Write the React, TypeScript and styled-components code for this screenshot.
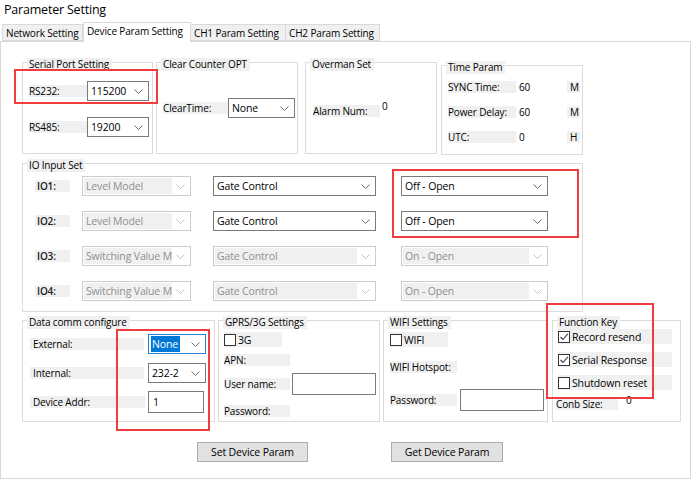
import styled, { createGlobalStyle } from "styled-components";

// ==================== Global =================

const GlobalStyle = createGlobalStyle`
  html, body {
    margin: 0;
    padding: 0;
    background: #fff;
  }
  body {
    font-family: "Open Sans", "Noto Sans", "Noto Sans CJK SC", sans-serif;
    font-size: 10px;
    letter-spacing: -0.15px;
    color: #000;
  }
  * {
    box-sizing: border-box;
  }
`;

// ==================== small controls =================

const Chevron = ({ color }: { color: string }) => (
  <svg width="9" height="5" viewBox="0 0 9 5">
    <path d="M0.5 0.5 L4.5 4.5 L8.5 0.5" fill="none" stroke={color} strokeWidth="1" />
  </svg>
);

interface IComboProps {
  width: number;
  value: string;
  disabled?: boolean;
  focused?: boolean;
}

const ComboBox = ({ width, value, disabled, focused }: IComboProps) => (
  <ComboFrame $w={width} $disabled={disabled} $focused={focused}>
    <ComboText $disabled={disabled}>
      {focused ? <Selected>{value}</Selected> : value}
    </ComboText>
    <ComboArrow>
      <Chevron color={disabled ? "#c4c4c4" : "#6d6d6d"} />
    </ComboArrow>
  </ComboFrame>
);

const ComboFrame = styled.div<{ $w: number; $disabled?: boolean; $focused?: boolean }>`
  width: ${(p) => p.$w}px;
  height: 20px;
  flex-shrink: 0;
  display: flex;
  padding: 1px;
  background: #fff;
  border: 1px solid
    ${(p) => (p.$disabled ? "#cccccc" : p.$focused ? "#2a83dc" : "#7a7a7a")};
`;

const ComboText = styled.div<{ $disabled?: boolean }>`
  flex: 1;
  min-width: 0;
  padding-left: 2px;
  font-size: 10.5px;
  line-height: 16px;
  white-space: nowrap;
  overflow: hidden;
  color: ${(p) => (p.$disabled ? "#8f8f8f" : "#000")};
  background: ${(p) => (p.$disabled ? "#f0f0f0" : "transparent")};
`;

const Selected = styled.span`
  display: inline-block;
  height: 16px;
  padding: 0 2px 0 1px;
  margin-left: -1px;
  background: #0078d7;
  color: #fff;
`;

const ComboArrow = styled.div`
  width: 17px;
  flex-shrink: 0;
  display: flex;
  align-items: center;
  justify-content: center;
`;

const TextBox = styled.div<{ $w: number; $h: number; $ml?: number }>`
  width: ${(p) => p.$w}px;
  height: ${(p) => p.$h}px;
  margin-left: ${(p) => p.$ml ?? 0}px;
  flex-shrink: 0;
  border: 1px solid #7a7a7a;
  background: #fff;
  padding-left: 4px;
  font-size: 10.5px;
  line-height: ${(p) => p.$h - 2}px;
`;

const CheckBox = ({ label, checked, width }: { label: string; checked?: boolean; width: number }) => (
  <CheckRow $w={width}>
    <CheckSquare>
      {checked && (
        <svg width="10" height="10" viewBox="0 0 10 10">
          <path d="M1.5 5 L4 7.5 L8.8 1.8" fill="none" stroke="#3c3c3c" strokeWidth="1.1" />
        </svg>
      )}
    </CheckSquare>
    <span>{label}</span>
  </CheckRow>
);

const CheckRow = styled.div<{ $w: number }>`
  width: ${(p) => p.$w}px;
  height: 15px;
  display: flex;
  align-items: center;
  gap: 2px;
  background: #f0f0f0;
  white-space: nowrap;
  font-size: 10.5px;
`;

const CheckSquare = styled.div`
  width: 12px;
  height: 12px;
  flex-shrink: 0;
  border: 1px solid #333;
  background: #fff;
  display: flex;
  align-items: center;
  justify-content: center;
`;

const Label = styled.div<{ $w: number; $h?: number; $pl?: number }>`
  width: ${(p) => p.$w}px;
  height: ${(p) => p.$h ?? 12}px;
  line-height: ${(p) => p.$h ?? 12}px;
  padding-left: ${(p) => p.$pl ?? 0}px;
  flex-shrink: 0;
  background: #f0f0f0;
  white-space: nowrap;
`;

const Value = styled.div<{ $w?: number; $ml?: number; $raise?: number }>`
  width: ${(p) => (p.$w ? `${p.$w}px` : "auto")};
  margin-left: ${(p) => p.$ml ?? 0}px;
  line-height: 12px;
  transform: translateY(${(p) => -(p.$raise ?? 0)}px);
`;

const Unit = styled.div`
  width: 13px;
  height: 12px;
  line-height: 12px;
  padding-left: 3px;
  background: #f0f0f0;
`;

// ==================== App =================

const App = () => {
  return (
    <Window>
      <GlobalStyle />
      <Caption>Parameter Setting</Caption>
      <TabStrip>
        <Tab $w={81}>Network Setting</Tab>
        <Tab $w={108} $active>
          Device Param Setting
        </Tab>
        <Tab $w={95}>CH1 Param Setting</Tab>
        <Tab $w={94}>CH2 Param Setting</Tab>
      </TabStrip>

      <Panel>
        {/* 윗줄: 시리얼 / 카운터 / 알람 / 시간 */}
        <GroupRow $top={20}>
          <Group $w={131} $h={92}>
            <GroupTitle>Serial Port Setting</GroupTitle>
            <Body $pt={10} $pl={6} $gap={16}>
              <FormRow $h={20}>
                <Label $w={58}>RS232:</Label>
                <ComboBox width={62} value="115200" />
              </FormRow>
              <FormRow $h={20}>
                <Label $w={58}>RS485:</Label>
                <ComboBox width={62} value="19200" />
              </FormRow>
            </Body>
          </Group>

          <Group $w={142} $h={92} $ml={3}>
            <GroupTitle>Clear Counter OPT</GroupTitle>
            <Body $pt={27} $pl={6}>
              <FormRow $h={20}>
                <Label $w={65}>ClearTime:</Label>
                <ComboBox width={67} value="None" />
              </FormRow>
            </Body>
          </Group>

          <Group $w={132} $h={92} $ml={7}>
            <GroupTitle>Overman Set</GroupTitle>
            <Body $pt={30} $pl={7}>
              <FormRow $h={20}>
                <Label $w={67}>Alarm Num:</Label>
                <Value $ml={2} $raise={5}>
                  0
                </Value>
              </FormRow>
            </Body>
          </Group>

          <Group $w={142} $h={90} $ml={4} $mt={3}>
            <GroupTitle>Time Param</GroupTitle>
            <Body $pt={7} $pl={6} $gap={13}>
              <FormRow $h={12}>
                <Label $w={68}>SYNC Time:</Label>
                <Value $w={48} $ml={3}>
                  60
                </Value>
                <Unit>M</Unit>
              </FormRow>
              <FormRow $h={12}>
                <Label $w={68}>Power Delay:</Label>
                <Value $w={48} $ml={3}>
                  60
                </Value>
                <Unit>M</Unit>
              </FormRow>
              <FormRow $h={12}>
                <Label $w={68}>UTC:</Label>
                <Value $w={48} $ml={3}>
                  0
                </Value>
                <Unit>H</Unit>
              </FormRow>
            </Body>
          </Group>
        </GroupRow>

        {/* IO 입력 */}
        <GroupRow $top={8}>
          <Group $w={561} $h={149}>
            <GroupTitle>IO Input Set</GroupTitle>
            <Body $pt={4} $pl={12} $gap={15}>
              {ioRows.map((row) => (
                <FormRow $h={20} key={row.name}>
                  <IoLabel>{row.name}</IoLabel>
                  <ComboSlot $ml={12}>
                    <ComboBox width={109} value={row.model} disabled />
                  </ComboSlot>
                  <ComboSlot $ml={22}>
                    <ComboBox width={163} value="Gate Control" disabled={!row.active} />
                  </ComboSlot>
                  <ComboSlot $ml={25}>
                    <ComboBox width={147} value={row.state} disabled={!row.active} />
                  </ComboSlot>
                </FormRow>
              ))}
            </Body>
          </Group>
        </GroupRow>

        {/* 아랫줄: 통신 / GPRS / WIFI / 기능키 */}
        <GroupRow $top={8}>
          <Group $w={193} $h={102}>
            <GroupTitle>Data comm configure</GroupTitle>
            <Body $pt={5} $pl={7}>
              <FormRow $h={20}>
                <Label $w={114} $pl={3}>
                  External:
                </Label>
                <ComboSlot $ml={4}>
                  <ComboBox width={58} value="None" focused />
                </ComboSlot>
              </FormRow>
              <FormRow $h={20} $mt={9}>
                <Label $w={114} $pl={3}>
                  Internal:
                </Label>
                <ComboSlot $ml={4}>
                  <ComboBox width={58} value="232-2" />
                </ComboSlot>
              </FormRow>
              <FormRow $h={22} $mt={8}>
                <Label $w={115} $pl={3}>
                  Device Addr:
                </Label>
                <TextBox $w={56} $h={22} $ml={3}>
                  1
                </TextBox>
              </FormRow>
            </Body>
          </Group>

          <Group $w={162} $h={102} $ml={3}>
            <GroupTitle>GPRS/3G Settings</GroupTitle>
            <Body $pt={3} $pl={5}>
              <CheckBox label="3G" width={58} />
              <FormRow $h={12} $mt={7}>
                <Label $w={66}>APN:</Label>
              </FormRow>
              <FormRow $h={22} $mt={7}>
                <Label $w={66}>User name:</Label>
                <TextBox $w={84} $h={22} $ml={2} />
              </FormRow>
              <FormRow $h={12} $mt={10}>
                <Label $w={66}>Password:</Label>
              </FormRow>
            </Body>
          </Group>

          <Group $w={165} $h={102} $ml={3}>
            <GroupTitle>WIFI Settings</GroupTitle>
            <Body $pt={3} $pl={6}>
              <CheckBox label="WIFI" width={58} />
              <FormRow $h={12} $mt={14}>
                <Label $w={67}>WIFI Hotspot:</Label>
              </FormRow>
              <FormRow $h={22} $mt={16}>
                <Label $w={67}>Password:</Label>
                <TextBox $w={84} $h={22} $ml={3} />
              </FormRow>
            </Body>
          </Group>

          <Group $w={129} $h={102} $ml={4}>
            <GroupTitle>Function Key</GroupTitle>
            <Body $pt={0} $pl={5} $gap={8}>
              <CheckBox label="Record resend" checked width={114} />
              <CheckBox label="Serial Response" checked width={114} />
              <CheckBox label="Shutdown reset" width={114} />
              <FormRow $h={12}>
                <ConbLabel $w={62}>Conb Size:</ConbLabel>
                <Value $ml={8} $raise={4}>
                  0
                </Value>
              </FormRow>
            </Body>
          </Group>
        </GroupRow>

        <ButtonRow>
          <Button $w={111} $ml={175}>
            Set Device Param
          </Button>
          <Button $w={112} $ml={83}>
            Get Device Param
          </Button>
        </ButtonRow>
      </Panel>

      {/* 빨간 표시 박스 */}
      <Mark $x={14} $y={69} $w={144} $h={35} />
      <Mark $x={392} $y={169} $w={187} $h={69} />
      <Mark $x={116} $y={329} $w={94} $h={102} />
      <Mark $x={546} $y={303} $w={108} $h={96} />
    </Window>
  );
};

export default App;

// ==================== layout =================

const Window = styled.div`
  position: relative;
  width: 693px;
  height: 480px;
  overflow: hidden;
  background: #fff;
`;

const Caption = styled.div`
  height: 22px;
  padding-left: 4px;
  font-size: 12.5px;
  letter-spacing: -0.2px;
  line-height: 20px;
`;

const TabStrip = styled.div`
  display: flex;
  align-items: flex-end;
  height: 19px;
  padding-left: 2px;
  position: relative;
  z-index: 1;
`;

const Tab = styled.div<{ $w: number; $active?: boolean }>`
  width: ${(p) => p.$w}px;
  height: ${(p) => (p.$active ? 20 : 17)}px;
  margin-bottom: ${(p) => (p.$active ? -1 : 0)}px;
  padding-left: 3px;
  line-height: ${(p) => (p.$active ? 17 : 16)}px;
  white-space: nowrap;
  border: 1px solid #d9d9d9;
  border-bottom: ${(p) => (p.$active ? "none" : "1px solid #d9d9d9")};
  border-left: ${(p) => (p.$active ? "1px solid #d9d9d9" : "none")};
  background: ${(p) => (p.$active ? "#fff" : "#f0f0f0")};

  &:first-child {
    border-left: 1px solid #d9d9d9;
  }
`;

const Panel = styled.div`
  width: 691px;
  height: 438px;
  border: 1px solid #d9d9d9;
  padding-left: 21px;
`;

const GroupRow = styled.div<{ $top: number }>`
  display: flex;
  align-items: flex-start;
  margin-top: ${(p) => p.$top}px;
`;

const Group = styled.div<{ $w: number; $h: number; $ml?: number; $mt?: number }>`
  width: ${(p) => p.$w}px;
  height: ${(p) => p.$h}px;
  margin-left: ${(p) => p.$ml ?? 0}px;
  margin-top: ${(p) => p.$mt ?? 0}px;
  flex-shrink: 0;
  border: 1px solid #dcdcdc;
`;

const GroupTitle = styled.div`
  width: max-content;
  height: 13px;
  line-height: 13px;
  margin: -5px 0 0 4px;
  padding: 0 3px 0 2px;
  background: #f0f0f0;
`;

const Body = styled.div<{ $pt: number; $pl: number; $gap?: number }>`
  display: flex;
  flex-direction: column;
  align-items: flex-start;
  padding-top: ${(p) => p.$pt}px;
  padding-left: ${(p) => p.$pl}px;
  gap: ${(p) => p.$gap ?? 0}px;
`;

const FormRow = styled.div<{ $h: number; $mt?: number }>`
  display: flex;
  align-items: center;
  height: ${(p) => p.$h}px;
  margin-top: ${(p) => p.$mt ?? 0}px;
`;

const ComboSlot = styled.div<{ $ml: number }>`
  margin-left: ${(p) => p.$ml}px;
`;

const IoLabel = styled.div`
  width: 35px;
  height: 12px;
  line-height: 12px;
  padding-left: 2px;
  background: #f0f0f0;
  font-weight: 600;
  color: #222;
`;

const ConbLabel = styled(Label)`
  margin-left: -2px;
`;

const ButtonRow = styled.div`
  display: flex;
  margin-top: 20px;
`;

const Button = styled.div<{ $w: number; $ml: number }>`
  width: ${(p) => p.$w}px;
  height: 20px;
  margin-left: ${(p) => p.$ml}px;
  border: 1px solid #adadad;
  background: #e1e1e1;
  text-align: center;
  font-size: 10.5px;
  line-height: 18px;
`;

const Mark = styled.div<{ $x: number; $y: number; $w: number; $h: number }>`
  position: absolute;
  left: ${(p) => p.$x}px;
  top: ${(p) => p.$y}px;
  width: ${(p) => p.$w}px;
  height: ${(p) => p.$h}px;
  border: 2px solid #f03c3c;
  pointer-events: none;
`;

// ==================== data =================

const ioRows = [
  { name: "IO1:", model: "Level Model", state: "Off - Open", active: true },
  { name: "IO2:", model: "Level Model", state: "Off - Open", active: true },
  { name: "IO3:", model: "Switching Value Mode", state: "On - Open", active: false },
  { name: "IO4:", model: "Switching Value Mode", state: "On - Open", active: false },
];
